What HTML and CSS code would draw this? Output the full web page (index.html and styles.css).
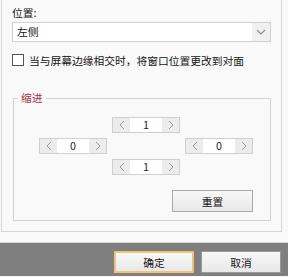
FILE: index.html
```html
<!DOCTYPE html>
<html lang="zh-CN">
<head>
  <meta charset="UTF-8"/>
  <title>位置</title>
  <link rel="stylesheet" href="styles.css">
</head>
<body>
  <div class="panel">
    <div class="field-label">位置:</div>
    <div class="select">
      <span class="select-text">左侧</span>
      <span class="select-arrow">
        <svg width="10" height="6" viewBox="0 0 10 6"><path d="M1 1 L5 5 L9 1" fill="none" stroke="#8a8a8a" stroke-width="1.1"/></svg>
      </span>
    </div>
    <label class="check-row">
      <span class="checkbox"></span>
      <span>当与屏幕边缘相交时，将窗口位置更改到对面</span>
    </label>

    <fieldset class="group">
      <legend>缩进</legend>
      <div class="spin-grid">
        <div class="spinner top">
          <span class="spin-btn"><svg width="6" height="10" viewBox="0 0 6 10"><path d="M5 1 L1 5 L5 9" fill="none" stroke="#9a9a9a" stroke-width="1"/></svg></span>
          <span class="spin-val">1</span>
          <span class="spin-btn"><svg width="6" height="10" viewBox="0 0 6 10"><path d="M1 1 L5 5 L1 9" fill="none" stroke="#9a9a9a" stroke-width="1"/></svg></span>
        </div>
        <div class="spinner left">
          <span class="spin-btn"><svg width="6" height="10" viewBox="0 0 6 10"><path d="M5 1 L1 5 L5 9" fill="none" stroke="#9a9a9a" stroke-width="1"/></svg></span>
          <span class="spin-val">0</span>
          <span class="spin-btn"><svg width="6" height="10" viewBox="0 0 6 10"><path d="M1 1 L5 5 L1 9" fill="none" stroke="#9a9a9a" stroke-width="1"/></svg></span>
        </div>
        <div class="spinner right">
          <span class="spin-btn"><svg width="6" height="10" viewBox="0 0 6 10"><path d="M5 1 L1 5 L5 9" fill="none" stroke="#9a9a9a" stroke-width="1"/></svg></span>
          <span class="spin-val">0</span>
          <span class="spin-btn"><svg width="6" height="10" viewBox="0 0 6 10"><path d="M1 1 L5 5 L1 9" fill="none" stroke="#9a9a9a" stroke-width="1"/></svg></span>
        </div>
        <div class="spinner bottom">
          <span class="spin-btn"><svg width="6" height="10" viewBox="0 0 6 10"><path d="M5 1 L1 5 L5 9" fill="none" stroke="#9a9a9a" stroke-width="1"/></svg></span>
          <span class="spin-val">1</span>
          <span class="spin-btn"><svg width="6" height="10" viewBox="0 0 6 10"><path d="M1 1 L5 5 L1 9" fill="none" stroke="#9a9a9a" stroke-width="1"/></svg></span>
        </div>
      </div>
      <div class="reset-row">
        <button class="btn reset">重置</button>
      </div>
    </fieldset>
  </div>

  <div class="footer">
    <button class="btn ok">确定</button>
    <button class="btn cancel">取消</button>
  </div>
</body>
</html>
```

FILE: styles.css
```css
body {
  margin: 0;
  background-color: #f9f9f9;
  font-family: "Noto Sans CJK SC", "Noto Sans", sans-serif;
  font-size: 10.75px;
  color: #151515;
}

.panel {
  box-sizing: border-box;
  width: 281px;
  height: 232px;
  margin-left: 1px;
  padding: 6px 10px 0 10px;
  border: 1px solid #d6d6d6;
  border-top: none;
  background-color: #f9f9f9;
}

.field-label {
  line-height: 14px;
}

.select {
  display: flex;
  box-sizing: border-box;
  height: 20px;
  margin-top: 2px;
  border: 1px solid #cfcfcf;
  background-color: #fff;
}

.select-text {
  flex: 1;
  padding-left: 4px;
  line-height: 18px;
}

.select-arrow {
  display: flex;
  align-items: center;
  justify-content: center;
  width: 18px;
  background-color: #f0f0f0;
}

.check-row {
  display: flex;
  align-items: center;
  gap: 5px;
  height: 16px;
  margin-top: 10px;
}

.checkbox {
  box-sizing: border-box;
  width: 12px;
  height: 12px;
  border: 1px solid #555;
  background-color: #fff;
}

.group {
  box-sizing: border-box;
  width: 258px;
  margin: 23px 0 0 1px;
  padding: 12px 17px 8px 25px;
  border: 1px solid #d3d3d3;
}

.group legend {
  margin-left: -21px;
  padding: 0 3px;
  line-height: 14px;
  color: #a0304a;
}

.spin-grid {
  display: grid;
  grid-template-columns: 68px 68px 68px;
  grid-template-rows: 16px 16px 16px;
  column-gap: 5px;
  row-gap: 5px;
}

.spinner {
  display: flex;
  box-sizing: border-box;
  height: 16px;
  border: 1px solid #cfcfcf;
  background-color: #fff;
}

.spinner.top { grid-column: 2; grid-row: 1; }
.spinner.left { grid-column: 1; grid-row: 2; }
.spinner.right { grid-column: 3; grid-row: 2; }
.spinner.bottom { grid-column: 2; grid-row: 3; }

.spin-btn {
  display: flex;
  align-items: center;
  justify-content: center;
  width: 17px;
  background-color: #ececec;
}

.spin-val {
  flex: 1;
  text-align: center;
  line-height: 14px;
  color: #1a1a40;
}

.reset-row {
  display: flex;
  justify-content: flex-end;
  margin-top: 15px;
}

.btn {
  box-sizing: border-box;
  width: 81px;
  height: 22px;
  padding: 0;
  border: 1px solid #a8a8a8;
  background: linear-gradient(#f8f8f8, #e8e8e8);
  font-family: inherit;
  font-size: 10.75px;
  color: #151515;
}

.footer {
  display: flex;
  justify-content: flex-end;
  gap: 7px;
  height: 34px;
  margin-top: 10px;
  padding: 8px 7px 0 0;
  box-sizing: border-box;
  border-top: 1px solid #d8d8d8;
  background-color: #7f7f7f;
}

.footer .btn {
  width: 80px;
  height: 22px;
  border-color: #9a9a9a;
}

.footer .ok {
  border: 2px solid #f2c27c;
}
```
